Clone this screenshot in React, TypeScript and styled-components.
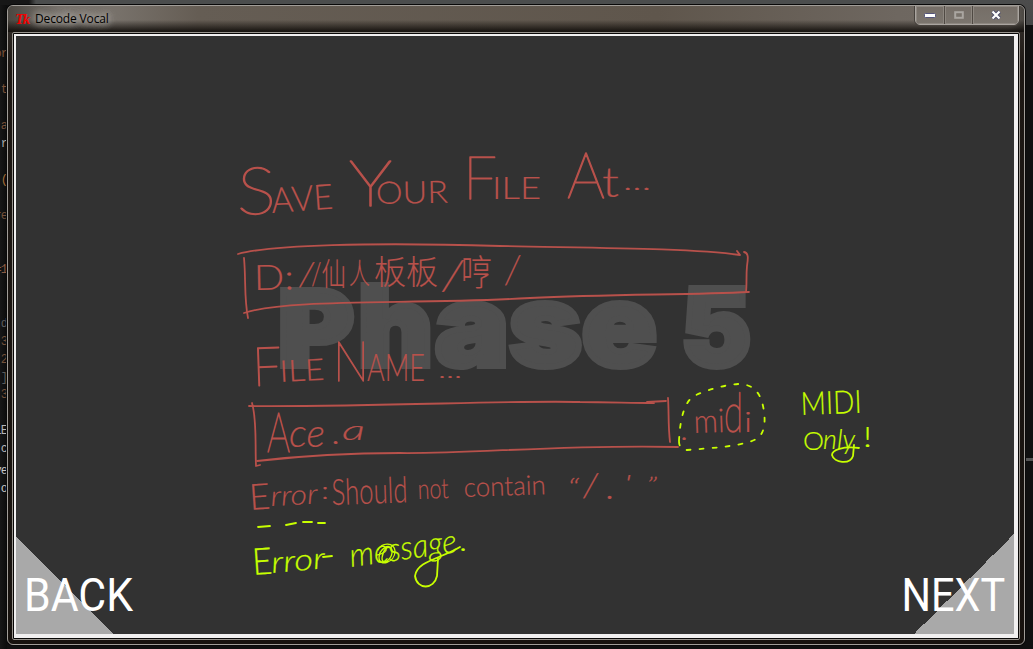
import React from "react";
import styled, { createGlobalStyle } from "styled-components";

const RED = "#b8514b";
const LIME = "#c8ff00";

const Global = createGlobalStyle`
  * { box-sizing: border-box; }
  html, body { margin: 0; padding: 0; background: #111; }
  body { overflow: hidden; }
`;

const Desktop = styled.div`
  position: relative;
  width: 1033px;
  height: 649px;
  padding: 5px 8px 4px 7px;
  overflow: hidden;
  background:
    linear-gradient(#555, #555) 1025px 458px / 8px 3px no-repeat,
    linear-gradient(#4c4c4c, #474747) 1020px 0 / 13px 25px no-repeat,
    linear-gradient(90deg, #171717 0 29px, #4b4d4d 36px) 0 0 / 100% 5px no-repeat,
    linear-gradient(90deg, #171717, #0c0c0c 7px) 0 0 / 7px 100% no-repeat,
    #101010;
`;

const CodeBit = styled.span<{ $top: number; $color: string }>`
  position: absolute;
  right: 1026px;
  top: ${(p) => p.$top}px;
  font: 12px/16px "Liberation Mono", monospace;
  letter-spacing: -1px;
  white-space: pre;
  color: ${(p) => p.$color};
`;

const Window = styled.div`
  position: relative;
  width: 1018px;
  height: 640px;
  padding: 0 4px 4px;
  border: 1px solid #a19d98;
  border-radius: 6px;
  overflow: hidden;
  background: linear-gradient(180deg, #39342f 0, #1d1814 60px, #17120e 100%);
  box-shadow: 0 0 0 1px #090909;
`;

const TitleBar = styled.div`
  display: flex;
  align-items: flex-start;
  justify-content: space-between;
  height: 26px;
  margin: 0 -4px;
  padding-left: 7px;
  background:
    linear-gradient(180deg, transparent 14px, rgba(13, 10, 7, 0.85) 25px),
    linear-gradient(90deg, #4b4741 0, #75706a 50px, #77716a 110px, #655d54 190px, #5f564c 650px, #6e6760 890px, #716b65 1000px, #4a4641 100%);
`;

const Caption = styled.div`
  display: flex;
  align-items: center;
  gap: 5px;
  height: 26px;
`;

const TkIcon = styled.span`
  width: 15px;
  font: italic bold 15px/18px "Liberation Serif", serif;
  letter-spacing: -1.5px;
  color: #f10000;
`;

const Title = styled.span`
  padding: 0 5px 0 0;
  font: 12px/16px "Open Sans", "Noto Sans", sans-serif;
  letter-spacing: -0.15px;
  color: #000;
  text-shadow: 0 0 9px #bcb7b1, 0 0 9px #aaa5a0, 0 0 6px #a6a19b, 0 0 12px #a6a19b;
`;

const Buttons = styled.div`
  display: flex;
  height: 20px;
  margin: -1px 5px 0 0;
  border: 1px solid #aaa5a0;
  border-radius: 0 0 5px 5px;
  box-shadow: inset 0 0 0 1px #534d47, 0 0 0 1px #47423d;
  overflow: hidden;
`;

const CaptionButton = styled.div<{ $width: number }>`
  display: flex;
  align-items: center;
  justify-content: center;
  width: ${(p) => p.$width}px;
  background: linear-gradient(#756e67, #7b756e);
  box-shadow: inset 0 0 0 1px #8d8780;
  & + & { border-left: 1px solid #4f4943; }
`;

const Client = styled.div`
  width: 1008px;
  height: 608px;
  border: 1px solid #99958f;
  border-radius: 2px;
  padding: 1px;
  background: #080706;
`;

const Surface = styled.div`
  width: 1004px;
  height: 604px;
  padding: 2px 4px 4px 2px;
  background: #f1f0f0;
`;

const Page = styled.main`
  position: relative;
  display: flex;
  align-items: flex-end;
  justify-content: space-between;
  width: 998px;
  height: 598px;
  overflow: hidden;
  background: #323232;
`;

const Corner = styled.div<{ $side: "left" | "right" }>`
  display: flex;
  width: ${(p) => (p.$side === "left" ? 98 : 100)}px;
  height: ${(p) => (p.$side === "left" ? 98 : 100)}px;
  justify-content: ${(p) => (p.$side === "left" ? "flex-start" : "flex-end")};
  align-items: flex-end;
  padding: 0 ${(p) => (p.$side === "left" ? 0 : 9)}px 12px ${(p) => (p.$side === "left" ? 8 : 0)}px;
  background: linear-gradient(
    to ${(p) => (p.$side === "left" ? "top right" : "top left")},
    #a9a9a9 50%,
    transparent 50%
  );
`;

const CornerLabel = styled.span<{ $side: "left" | "right" }>`
  font: 46px/54px Roboto, sans-serif;
  color: #fff;
  white-space: nowrap;
  transform: scaleX(${(p) => (p.$side === "left" ? 0.93 : 0.9)});
  transform-origin: ${(p) => p.$side} center;
`;

const Sketch = styled.svg`
  position: absolute;
  left: 0;
  top: 0;
`;

const Ink = styled.text<{ $italic?: boolean; $fine?: boolean }>`
  font-family: Lato, "Noto Sans CJK SC", sans-serif;
  font-weight: ${(p) => (p.$fine ? 100 : 300)};
  font-style: ${(p) => (p.$italic ? "italic" : "normal")};
  stroke-width: ${(p) => (p.$fine ? 1.4 : 0.2)}px;
`;

const Watermark = styled.text`
  font-family: Inter, sans-serif;
  font-weight: 900;
  fill: #4f4f4f;
  stroke: #4f4f4f;
  stroke-width: 6px;
  stroke-linejoin: miter;
`;

type WordProps = {
  t: string;
  x: number;
  y: number;
  w: number;
  s: number;
  r?: number;
  i?: boolean;
};

function Word({ t, x, y, w, s, r = 0, i }: WordProps) {
  return (
    <Ink
      $italic={i}
      $fine={s >= 42}
      x={x}
      y={y}
      fontSize={s}
      textLength={w}
      lengthAdjust="spacingAndGlyphs"
      transform={r ? `rotate(${r} ${x} ${y})` : undefined}
    >
      {t}
    </Ink>
  );
}

const redWords: WordProps[] = [
  { t: "S", x: 237, y: 214, w: 39, s: 66 },
  { t: "AVE", x: 272, y: 213, w: 62, s: 35, r: -4 },
  { t: "Y", x: 349, y: 206, w: 43, s: 64 },
  { t: "OUR", x: 376, y: 204, w: 72, s: 31, r: -1 },
  { t: "F", x: 463, y: 199, w: 34, s: 60 },
  { t: "ILE", x: 492, y: 199, w: 49, s: 31 },
  { t: "A", x: 567, y: 198, w: 38, s: 63 },
  { t: "t", x: 602, y: 197, w: 17, s: 41 },
  { t: "...", x: 623, y: 190, w: 28, s: 24 },
  { t: "D:", x: 254, y: 290, w: 40, s: 35, r: -1 },
  { t: "/", x: 299, y: 286, w: 15, s: 34, i: true },
  { t: "/仙", x: 311, y: 285, w: 35, s: 31 },
  { t: "人", x: 349, y: 284, w: 21, s: 29 },
  { t: "板板", x: 374, y: 284, w: 64, s: 33 },
  { t: "/", x: 442, y: 290, w: 21, s: 41, i: true },
  { t: "哼", x: 461, y: 286, w: 31, s: 36 },
  { t: "/", x: 505, y: 284, w: 15, s: 39, i: true },
  { t: "F", x: 253, y: 386, w: 29, s: 54, r: -2 },
  { t: "ILE", x: 280, y: 382, w: 45, s: 30, r: -3 },
  { t: "N", x: 333, y: 381, w: 36, s: 56 },
  { t: "AME", x: 367, y: 381, w: 58, s: 37 },
  { t: "...", x: 438, y: 378, w: 24, s: 22 },
  { t: "A", x: 267, y: 452, w: 23, s: 55 },
  { t: "ce", x: 289, y: 447, w: 36, s: 40, i: true },
  { t: ".", x: 331, y: 444, w: 9, s: 32 },
  { t: "a", x: 342, y: 440, w: 23, s: 28, i: true },
  { t: "E", x: 250, y: 510, w: 21, s: 36, r: -4 },
  { t: "rror", x: 271, y: 506, w: 47, s: 28, r: -3, i: true },
  { t: ":", x: 321, y: 499, w: 8, s: 24 },
  { t: "Should", x: 332, y: 505, w: 76, s: 36, r: -2 },
  { t: "not", x: 418, y: 499, w: 31, s: 28, r: -2 },
  { t: "contain", x: 464, y: 497, w: 82, s: 27, r: -2 },
  { t: "“", x: 567, y: 497, w: 12, s: 25, i: true },
  { t: "/", x: 583, y: 497, w: 15, s: 34, i: true },
  { t: ".", x: 605, y: 499, w: 9, s: 34 },
  { t: "'", x: 624, y: 492, w: 7, s: 24, i: true },
  { t: "”", x: 646, y: 494, w: 11, s: 24, i: true },
  { t: ".", x: 680, y: 440, w: 8, s: 28 },
  { t: "mi", x: 694, y: 433, w: 31, s: 33, r: -2 },
  { t: "d", x: 724, y: 432, w: 19, s: 54 },
  { t: "i", x: 744, y: 432, w: 8, s: 27 },
];

const limeWords: WordProps[] = [
  { t: "MIDI", x: 801, y: 415, w: 61, s: 32, r: -2 },
  { t: "O", x: 803, y: 450, w: 21, s: 25 },
  { t: "nly", x: 823, y: 449, w: 32, s: 28, i: true },
  { t: "!", x: 863, y: 447, w: 9, s: 27 },
  { t: "E", x: 253, y: 575, w: 20, s: 37, r: -4 },
  { t: "rror", x: 272, y: 573, w: 54, s: 30, r: -5, i: true },
  { t: "message", x: 351, y: 567, w: 108, s: 33, r: -8, i: true },
  { t: ".", x: 459, y: 551, w: 8, s: 30 },
];

function Notes() {
  return (
    <Sketch width="998" height="598" viewBox="16 36 998 598" fill="none" strokeLinecap="round" strokeLinejoin="round">
      <Watermark x="278" y="366" fontSize="105" textLength="76" lengthAdjust="spacingAndGlyphs">P</Watermark>
      <Watermark x="358" y="366" fontSize="111" textLength="75" lengthAdjust="spacingAndGlyphs">h</Watermark>
      <Watermark x="435" y="366" fontSize="114" textLength="222" lengthAdjust="spacingAndGlyphs">ase</Watermark>
      <Watermark x="681" y="366" fontSize="107" textLength="70" lengthAdjust="spacingAndGlyphs">5</Watermark>

      <g stroke={RED} strokeWidth="1.8">
        <path d="M238 254C270 245 370 242 500 246C590 248 690 248 740 255M737 251l3 4" />
        <path d="M244 258C246 280 244 298 248 318" />
        <path d="M244 313C290 298 410 305 530 298C610 294 690 295 749 292" />
        <path d="M744 252c5 1 4 7 3 14c-1 10 0 17 -1 26" />
        <path d="M249 406C380 407 510 400 580 402C610 402 630 403 654 403M647 402l19 -1" />
        <path d="M252 403C257 420 255 445 256 466l4 -1" />
        <path d="M257 461C300 456 345 453 400 453C470 454 570 444 678 447" />
        <path d="M668 398C669 412 668 425 670 442" />
      </g>
      <g fill={RED} stroke={RED}>
        {redWords.map((w, n) => <Word key={n} {...w} />)}
      </g>

      <g stroke={LIME} strokeWidth="1.8">
        <path d="M679 441C680 420 684 402 694 396C706 390 724 385 738 384C753 384 760 392 763 406C766 420 765 432 758 438C746 446 713 448 687 450C681 450 679 446 679 441" strokeDasharray="4 9" />
        <path d="M258 527l12 -1M286 525l10 -2M303 522l9 0M318 523l7 0" />
        <path d="M859 448C843 446 832 450 832 455C834 463 850 465 853 456L854 445" />
        <path d="M323 557l9 -1M460 547C440 559 417 561 415 576C417 590 434 590 437 576L438 559" />
        <path d="M378 550c4 -8 16 -8 17 1c0 12 -16 16 -16 7c0 -9 11 -16 13 -8c1 9 -10 17 -10 8c1 -8 5 -12 8 -10" strokeWidth="1.3" />
      </g>
      <g fill={LIME} stroke={LIME}>
        {limeWords.map((w, n) => <Word key={n} {...w} />)}
      </g>
    </Sketch>
  );
}

const codeBits: [string, number, string][] = [
  ["or", 46, "#7b5138"],
  ["t", 82, "#7b5138"],
  ["a", 118, "#7b5138"],
  ["r", 136, "#aaa"],
  ["(", 172, "#a36d37"],
  ["re", 208, "#74513a"],
  ["=1", 262, "#8a5b43"],
  ["d", 316, "#5c5c5c"],
  ["3", 334, "#74513a"],
  ["2", 352, "#74513a"],
  ["]", 370, "#5c5c5c"],
  ["3", 387, "#74513a"],
  ["LE", 423, "#b5b5b5"],
  ["c", 441, "#b5b5b5"],
  ["ve", 463, "#c5c5c5"],
  ["o", 481, "#c5c5c5"],
];

export default function App() {
  return (
    <Desktop>
      <Global />
      {codeBits.map(([text, top, color]) => (
        <CodeBit key={top} $top={top} $color={color}>{text}</CodeBit>
      ))}
      <Window>
        <TitleBar>
          <Caption>
            <TkIcon>Tk</TkIcon>
            <Title>Decode Vocal</Title>
          </Caption>
          <Buttons>
            <CaptionButton $width={28}>
              <svg width="12" height="5"><rect x=".5" y=".5" width="11" height="4" rx="1" fill="#fff" stroke="#55557a" /></svg>
            </CaptionButton>
            <CaptionButton $width={28}>
              <svg width="10" height="8"><rect x="1.2" y="1.2" width="7.6" height="5.6" fill="none" stroke="#aaa6a1" strokeWidth="2" /></svg>
            </CaptionButton>
            <CaptionButton $width={46}>
              <svg width="12" height="10" viewBox="0 0 12 10">
                <path d="M2.5 1.5L9.5 8.5M9.5 1.5L2.5 8.5" stroke="#4e4e6c" strokeWidth="4" />
                <path d="M2.5 1.5L9.5 8.5M9.5 1.5L2.5 8.5" stroke="#fff" strokeWidth="2.2" />
              </svg>
            </CaptionButton>
          </Buttons>
        </TitleBar>
        <Client>
          <Surface>
            <Page>
              <Notes />
              <Corner $side="left"><CornerLabel $side="left">BACK</CornerLabel></Corner>
              <Corner $side="right"><CornerLabel $side="right">NEXT</CornerLabel></Corner>
            </Page>
          </Surface>
        </Client>
      </Window>
    </Desktop>
  );
}
